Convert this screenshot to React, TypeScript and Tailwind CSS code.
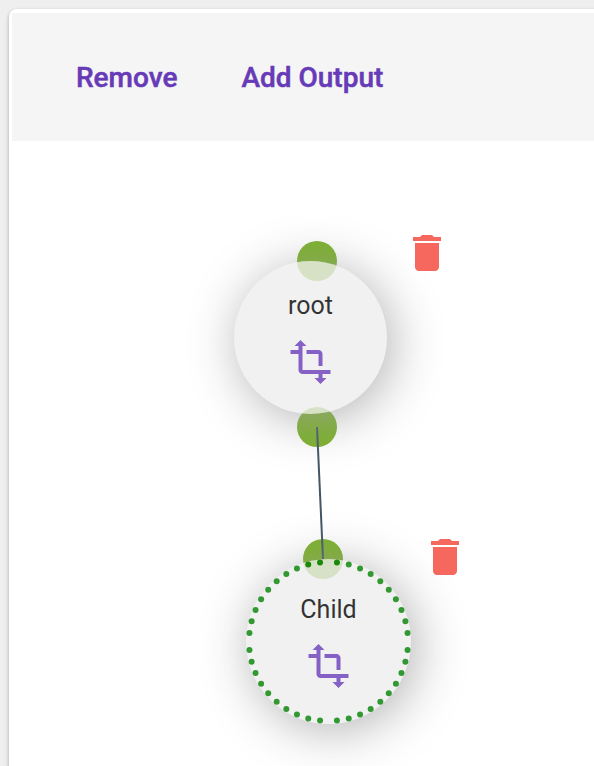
import { MdDelete, MdTransform } from "react-icons/md";

type NodeProps = { label: string; place: string; circle: string; trash: string; selected?: boolean };

// Ten dots in each quadrant of the selection ring.
const ringDots = Array.from({ length: 40 }, (_, i) => {
  const degrees = Math.floor(i / 10) * 90 + 6.1 + (i % 10) * 8.644;
  const a = (degrees * Math.PI) / 180;
  return { x: 82.5 + 79.5 * Math.cos(a), y: 82.5 + 79.5 * Math.sin(a) };
});

function GraphNode({ label, place, circle, trash, selected }: NodeProps) {
  return (
    <div className={`absolute opacity-80 ${place}`}>
      <div className={`rounded-full bg-[#eeeeee] text-center shadow-[5px_6px_50px_#a0a0a0] ${circle}`}>
        <div className="flex flex-col items-center">
          <span className="text-[25px] leading-[30px] text-black">{label}</span>
          <svg className="mt-[17px] size-12 shrink-0" viewBox="0 0 48 48">
            <MdTransform x="-0.5" y="0" size={48} color="#673ab7" />
          </svg>
        </div>
      </div>
      {selected && (
        <svg className="absolute left-0 top-0 fill-[#008000]" width="165" height="165">
          {ringDots.map((d, i) => (
            <circle key={i} cx={d.x} cy={d.y} r="3" />
          ))}
        </svg>
      )}
      <MdDelete className={`absolute size-12 text-[#f44336] ${trash}`} />
    </div>
  );
}

export default function App() {
  return (
    <div className="h-[766px] w-[594px] overflow-hidden bg-[#efefef] pl-[9px] pt-[9px] font-[Roboto,sans-serif]">
      <div className="h-[800px] w-[640px] rounded-tl-[8px] bg-white pl-[3px] pt-1 shadow-[0_2px_4px_rgba(0,0,0,0.3)]">
        <header className="flex h-32 items-center gap-16 bg-[#f5f5f5] pl-16 pt-0.5 text-[28px] font-medium text-[#673ab7] [-webkit-text-stroke:0.5px_#673ab7]">
          <button className="whitespace-nowrap">Remove</button>
          <button className="whitespace-nowrap">Add Output</button>
        </header>
        <main className="relative h-[640px] overflow-hidden">
          <i className="absolute left-[285px] top-[100px] size-10 rounded-full bg-[#7ab02a]" />
          <i className="absolute left-[285px] top-[266px] size-10 rounded-full bg-[#7ab02a]" />
          <i className="absolute left-[291px] top-[398px] size-10 rounded-full bg-[#7ab02a]" />
          <svg className="absolute left-0 top-0" width="582" height="640">
            <line x1="305" y1="286" x2="311" y2="418" stroke="#456" strokeWidth="2" />
          </svg>
          <GraphNode label="root" place="left-[222px] top-[120px]" circle="size-[153px] pt-[30px]" trash="left-[169px] top-[-32px]" />
          <GraphNode label="Child" place="left-[234px] top-[418px]" circle="size-[165px] pt-[36px]" trash="left-[175px] top-[-26px]" selected />
        </main>
      </div>
    </div>
  );
}
